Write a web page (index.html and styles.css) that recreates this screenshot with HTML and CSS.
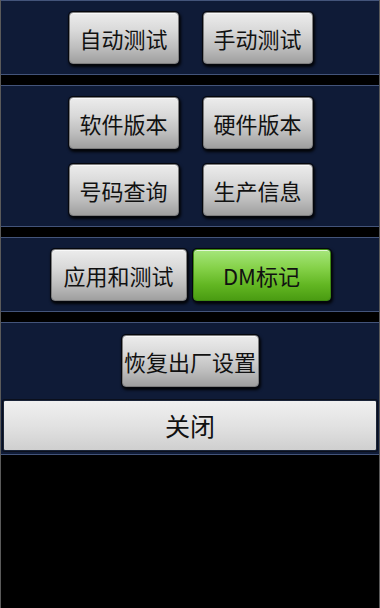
FILE: index.html
```html
<!DOCTYPE html>
<html lang="zh-CN">
<head>
<meta charset="utf-8">
<title>工程模式</title>
<link rel="stylesheet" href="styles.css">
</head>
<body>
<div class="screen">
  <section class="panel p1">
    <div class="row gap-wide">
      <button class="btn w110">自动测试</button>
      <button class="btn w110">手动测试</button>
    </div>
  </section>
  <section class="panel p2">
    <div class="row gap-wide">
      <button class="btn w110">软件版本</button>
      <button class="btn w110">硬件版本</button>
    </div>
    <div class="row gap-wide">
      <button class="btn w110">号码查询</button>
      <button class="btn w110">生产信息</button>
    </div>
  </section>
  <section class="panel p3">
    <div class="row gap-narrow">
      <button class="btn w136">应用和测试</button>
      <button class="btn btn-green w138">DM标记</button>
    </div>
  </section>
  <section class="panel p4">
    <div class="row">
      <button class="btn w137">恢复出厂设置</button>
    </div>
    <button class="close">关闭</button>
  </section>
</div>
</body>
</html>
```
FILE: styles.css
```css
* { box-sizing: border-box; }
html, body {
  margin: 0;
  padding: 0;
  background: #000;
}
body {
  width: 380px;
  height: 608px;
  overflow: hidden;
  font-family: "Noto Sans CJK SC", "Noto Sans", "DejaVu Sans", sans-serif;
}
.screen {
  width: 380px;
  height: 608px;
  background: #000;
  border-left: 1px solid #5a5a5a;
  border-right: 1px solid #5a5a5a;
  display: flex;
  flex-direction: column;
  gap: 10px;
}
.panel {
  background: #0f1b37;
  border-top: 1px solid #43547a;
  border-bottom: 1px solid #43547a;
  display: flex;
  flex-direction: column;
}
.p1, .p3 { padding: 11px 0 10px; }
.p2 { padding: 11px 0 10px; gap: 15px; }
.p4 { padding: 12px 2px 3px; gap: 13px; }
.row {
  display: flex;
  justify-content: center;
}
.gap-wide { gap: 24px; padding-left: 1px; }
.gap-narrow { gap: 6px; padding-left: 1px; }
.btn {
  height: 52px;
  margin: 0;
  padding: 0;
  border: 1px solid #7d7d7d;
  border-radius: 4px;
  background: linear-gradient(#ececec 0%, #d9d9d9 35%, #bdbdbd 70%, #9f9f9f 100%);
  box-shadow: 0 0 0 1px #05070d, 1px 2px 3px 1px rgba(0,0,0,0.9), inset 0 1px 0 rgba(255,255,255,0.7);
  color: #111;
  font-family: "Noto Sans CJK SC", "Noto Sans", sans-serif;
  font-size: 22px;
  line-height: 1;
  white-space: nowrap;
  display: flex;
  align-items: center;
  justify-content: center;
}
.btn-green {
  border-color: #3f8a12;
  background: linear-gradient(#a6e67c 0%, #86d24a 35%, #62b622 70%, #4a9c12 100%);
}
.w110 { width: 110px; }
.w136 { width: 136px; }
.w138 { width: 138px; }
.w137 { width: 137px; }
.close {
  height: 51px;
  width: 374px;
  margin: 0;
  padding: 0;
  border: 1px solid #1a2438;
  border-radius: 2px;
  background: linear-gradient(#f0f0f0 0%, #e2e2e2 50%, #cfcfcf 100%);
  box-shadow: 0 0 0 1px #0a0f1c;
  color: #111;
  font-family: "Noto Sans CJK SC", "Noto Sans", sans-serif;
  font-size: 25px;
  line-height: 1;
  display: flex;
  align-items: center;
  justify-content: center;
}
```
